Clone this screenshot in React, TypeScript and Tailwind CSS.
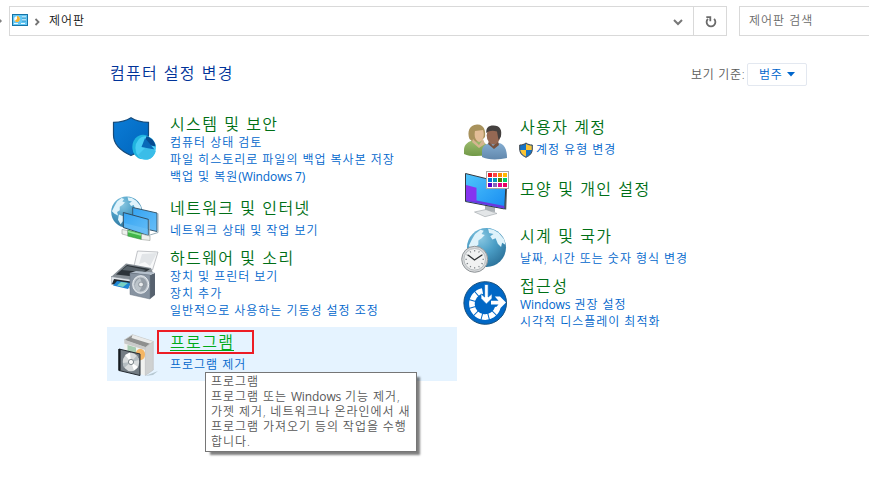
import React from "react";
import clsx from "clsx";

interface Category {
  title: string;
  links: React.ReactNode[];
  icon: React.ReactNode;
  row: string;
  iconPad: string;
  textPad: string;
  linkGap?: string;
  active?: boolean;
  shield?: boolean;
}

const Latin = ({ children }: { children: React.ReactNode }) => (
  <span className="font-normal tracking-[-0.1px]">{children}</span>
);

const Svg = ({ children }: { children: React.ReactNode }) => (
  <svg width="48" height="50" viewBox="0 0 48 50" className="block shrink-0">
    {children}
  </svg>
);

const Continents = () => (
  <g fill="#dff3fb">
    <path d="M-14-7L-11-12L-6-16L-3-15L-5-12L-2-11L-5-8L-8-6L-8-2L-11 0L-10 4L-14 2L-17-1Z" />
    <path d="M1-17L6-16L11-13L16-7L17-2L14-4L13 0L10-3L8-8L5-7L3-10L6-12L2-13Z" />
    <path d="M-9 3L-4 5L-3 9L-7 14L-10 9Z" />
  </g>
);

const SecurityIcon = () => (
  <Svg>
    <defs>
      <linearGradient id="shield" x1="0" y1="0" x2="1" y2="1">
        <stop stopColor="#0b7cd6" />
        <stop offset="1" stopColor="#0065bc" />
      </linearGradient>
    </defs>
    <path d="M20 2.8C15 6 9 7.3 2.5 7.3V20C2.5 29 10 36 20 40.5C31 36 37.5 29 37.5 20V7.3C31 7.3 25 6 20 2.8Z" fill="url(#shield)" stroke="#164a79" strokeWidth="1.2" />
    <ellipse cx="32" cy="32" rx="10.7" ry="12.2" fill="#20b4df" />
    <ellipse cx="34.7" cy="33" rx="10.3" ry="11.8" fill="#48cdf4" />
    <path d="M35 32L44.7 36C43.5 40.5 41 43.5 37 44.5C33 45 29 43 27 40Z" fill="#3abde8" />
    <path d="M33 29L35.5 21.2C40.5 22.5 44 26 44.6 31.5Z" fill="#064b91" />
    <path d="M30.5 32L34 23L43.5 34.5Z" fill="#0969b8" />
  </Svg>
);

const NetworkIcon = () => (
  <Svg>
    <defs>
      <radialGradient id="globe" cx="0.35" cy="0.25" r="0.8">
        <stop stopColor="#8ac8e2" />
        <stop offset="0.5" stopColor="#4b9ec6" />
        <stop offset="1" stopColor="#2d739b" />
      </radialGradient>
      <linearGradient id="screen" x1="0" y1="0" x2="1" y2="1">
        <stop stopColor="#34a4f2" />
        <stop offset="1" stopColor="#66bdf7" />
      </linearGradient>
    </defs>
    <circle cx="15.7" cy="17" r="15.5" fill="url(#globe)" />
    <g transform="translate(15.7 17) scale(.87)"><Continents /></g>
    <path d="M21.7 12.5L46 18V36.5L21.7 31Z" fill="url(#screen)" stroke="#385a70" />
    <path d="M47 18.5V37.5L39 40" fill="none" stroke="#98adb8" />
    <path d="M12.3 17.5L37.3 24.3V40.5L12.3 32.5Z" fill="url(#screen)" stroke="#304e63" />
    <path d="M13 28L37 34V40L13 32Z" fill="#78c6f8" opacity=".4" />
    <path d="M38.3 25V41" stroke="#98adb8" />
    <path d="M16.5 35L30.5 38.5V44.5L16.5 41Z" fill="#42b54a" stroke="#278634" strokeWidth=".5" />
    <path d="M17 36.5L30 39.8" stroke="#92e598" strokeWidth="1.8" />
    <path d="M11 34.5L16.5 35.5V40.5L11 39ZM30.5 39L39 41V45.5L30.5 44.5Z" fill="#eef0ed" stroke="#999e99" strokeWidth=".6" />
  </Svg>
);

const HardwareIcon = () => (
  <Svg>
    <path d="M26.5 1L47 2L41.5 20L23 16Z" fill="#f7f8f9" stroke="#a7abb0" strokeWidth=".7" />
    <path d="M31 4L46 3L39 16L34 12L28 14Z" fill="#e2e5e8" />
    <path d="M0 27L15 13.5L24 15L40 18L42 23L24 32Z" fill="#858d94" />
    <path d="M5 24.5L16 15L39 19L27 27Z" fill="#2c3339" />
    <path d="M11 20L16 16L35 20L31 22Z" fill="#59636b" />
    <path d="M0 26.5L24 30V39L0 34Z" fill="#e3e7ec" stroke="#858e96" strokeWidth=".7" />
    <path d="M3 29L20 31.5L17 36L1 34Z" fill="#20282e" />
    <path d="M6 31L20 33L17 39L2 35.5Z" fill="#1f85d3" />
    <path d="M10 32L17 33L12 37L6 35.5Z" fill="#77d1c3" />
    <path d="M39 25L44 23V45L39 49Z" fill="#56616e" />
    <path d="M19 23L25 21L44 22.5L39 25Z" fill="#b4bfcb" />
    <path d="M19 23L39 25V49L19 44.5Z" fill="#8793a1" stroke="#687482" strokeWidth=".5" />
    <ellipse cx="29.7" cy="34.5" rx="8" ry="8.8" fill="#c4cbd2" stroke="#ecf0f3" />
    <ellipse cx="29.7" cy="34.5" rx="6.3" ry="7" fill="#969fa8" />
    <path d="M29 28L32 35L28 42C23 39 22 32 29 28" fill="#bcc4ca" />
    <circle cx="30" cy="34.5" r="2.4" fill="#e8ebed" stroke="#68717a" strokeWidth=".6" />
  </Svg>
);

const ProgramsIcon = () => (
  <Svg>
    <path d="M34 45L47 40L42 44Z" fill="#b7c8d2" />
    <path d="M13.3 9L21.5 3.7L42.3 10.5L34.3 16.5Z" fill="#8e8f8e" stroke="#c8c9c7" strokeWidth=".8" />
    <path d="M21.5 3.7L42.3 10.5L40 13L20.5 7Z" fill="#e9eae9" />
    <path d="M13.3 10L34.3 16.5V44.5L13.3 39Z" fill="#f1f2f0" />
    <path d="M16.5 14L25 16.5V24L16.5 21.5Z" fill="#a6ccb0" />
    <ellipse cx="29.3" cy="23.5" rx="4.8" ry="5.8" fill="#f5b663" />
    <path d="M34.3 16.5L42.3 10.5V39L34.3 44.5Z" fill="#cfd1d1" stroke="#b5b7b7" strokeWidth=".5" />
    <path d="M13.3 9L34.3 16V19L13.3 12.5Z" fill="#c9cac9" />
    <path d="M8 18L29 23V44.5L8 39.5Z" fill="#737c83" stroke="#242a30" />
    <path d="M8.5 18V39.5" stroke="#171c21" strokeWidth="2.2" />
    <ellipse cx="20" cy="31" rx="8.2" ry="9.3" fill="#d7dbdc" />
    <path d="M20 31L14 24L19 21.5ZM20 31L27 36L23 39.5Z" fill="#ffffff" />
    <path d="M20 31L13 37L11.8 32ZM20 31L26 24.5L28 29Z" fill="#b4bdc1" />
    <circle cx="20" cy="31" r="2.6" fill="#f9fafa" stroke="#7c868a" />
  </Svg>
);

const UsersIcon = () => (
  <Svg>
    <defs>
      <linearGradient id="green" x1="0" y1="0" x2="0" y2="1"><stop stopColor="#9fbd70" /><stop offset="1" stopColor="#719947" /></linearGradient>
      <linearGradient id="blue" x1="0" y1="0" x2="0" y2="1"><stop stopColor="#83acd0" /><stop offset="1" stopColor="#6288ad" /></linearGradient>
    </defs>
    <path d="M3 36V32C3 26 8 23 13 22H20L26 27V37.5C18 38 9 39 3 36Z" fill="url(#green)" />
    <path d="M8.5 21C6 14 8 7 16 6.5C23 6 25 13 24 19L20 23L12 24Z" fill="#a8925c" />
    <path d="M14 13L22 12C24 17 22 23 18 24C14 22 13 18 14 13Z" fill="#e2bd97" />
    <path d="M12 21L18 27L22 21L24 26L18 30L11 24Z" fill="#d4b58f" />
    <path d="M21 39V33C21 28 25 25.5 30 25H38C43 26 46 31 46 40C38 42 26 42 21 39Z" fill="url(#blue)" />
    <path d="M28 23L32 28L37 23L38 27L33 31L27 26Z" fill="#77523f" />
    <ellipse cx="32.5" cy="17.5" rx="6.8" ry="9" fill="#946853" />
    <path d="M25.3 15C25 10 27 7.5 32.5 7.5C39 7.5 41.5 12 39.8 19L37.5 22L36 13.5C32 12 28 12.5 25.3 15Z" fill="#45413f" />
  </Svg>
);

const swatches = [
  "#e81123", "#ff4343", "#ff8c00", "#ffb900",
  "#0078d7", "#0099bc", "#498205", "#00cc6a",
  "#5500cc", "#8764b8", "#e3008c", "#ea005e",
];

const AppearanceIcon = () => (
  <Svg>
    <defs><linearGradient id="display" x1="0" y1="0" x2="1" y2="1"><stop stopColor="#50c5fc" /><stop offset="1" stopColor="#168bf1" /></linearGradient></defs>
    <path d="M24 36L34 38V43L24 42Z" fill="#a9b0b5" />
    <path d="M13.5 43L25 40.5L36 44.5L24 47.7Z" fill="#e3e6e8" stroke="#9ca3a7" strokeWidth=".6" />
    <path d="M4.5 4.5L45 14.5L43.7 40L4.5 32.5Z" fill="url(#display)" stroke="#333940" />
    <path d="M5 30L15.5 31.5L43.3 37V39.5L5 32Z" fill="#6a38df" />
    <path d="M5 16L15.5 18.7V32.5L5 31Z" fill="#8634ef" />
    <path d="M45.4 17L44.7 40.5" fill="none" stroke="#252b31" />
    <rect x="25.5" y="2.5" width="22" height="17" fill="#ffffff" stroke="#a7a7a7" />
    {swatches.map((c, i) => (
      <rect key={c} x={27 + (i % 4) * 5} y={4 + Math.floor(i / 4) * 5} width="4" height="4" fill={c} />
    ))}
  </Svg>
);

const ClockIcon = () => (
  <Svg>
    <circle cx="25.5" cy="22.5" r="19.5" fill="url(#globe)" />
    <g transform="translate(26 22) scale(1.08)"><Continents /></g>
    <circle cx="13.7" cy="34.3" r="13" fill="#d6d8da" stroke="#919699" />
    <circle cx="13.7" cy="34.3" r="10.8" fill="#f1f2f2" stroke="#b9bec0" />
    <g stroke="#777d82" strokeWidth="1">
      {[0, 30, 60, 90, 120, 150, 180, 210, 240, 270, 300, 330].map((a) => (
        <path key={a} d="M13.7 25V26.5" transform={`rotate(${a} 13.7 34.3)`} />
      ))}
    </g>
    <path d="M7 30L13.5 35L21 30" fill="none" stroke="#303436" strokeWidth="1.4" />
  </Svg>
);

const AccessIcon = () => (
  <Svg>
    <circle cx="24.2" cy="24" r="21.3" fill="#0067c5" stroke="#174f7d" />
    <path d="M21.5 12A13.2 13.2 0 1 0 36.8 28.5" fill="none" stroke="#ffffff" strokeWidth="5.6" />
    <g stroke="#0067c5" strokeWidth="1">
      {[135, 165, 195, 225, 255, 285, 320].map((a) => (
        <path key={a} d="M24.2 8V16" transform={`rotate(${a} 24.2 25)`} />
      ))}
    </g>
    <path d="M23.6 5.5H27.2V18L31 14.8V19.5L25.4 25L20 19.5V14.8L23.6 18Z" fill="#ffffff" stroke="#0067c5" strokeWidth=".7" />
    <path d="M30 21.8H37.5L33.8 17.5H39L45 23.5L39 29.5H33.8L37.5 25.5H30Z" fill="#ffffff" />
  </Svg>
);

const UacShield = () => (
  <svg width="14" height="16" viewBox="0 0 14 16" className="-ml-px mr-[3px] shrink-0">
    <path d="M7 1C5 2.5 3 3 .7 3V7C.7 11 3 13.5 7 15.3C11 13.5 13.3 11 13.3 7V3C11 3 9 2.5 7 1Z" fill="#1673c5" stroke="#42484d" />
    <path d="M7 2C9 3.3 11 3.6 12.7 3.7V8H7ZM1.3 8H7V14.5C3.5 13 1.6 10.5 1.3 8Z" fill="#fbc333" />
  </svg>
);

const leftItems: Category[] = [
  {
    title: "시스템 및 보안",
    links: ["컴퓨터 상태 검토", "파일 히스토리로 파일의 백업 복사본 저장", <>백업 및 복원<Latin>(Windows 7)</Latin></>],
    icon: <SecurityIcon />, row: "h-[84px]", iconPad: "pt-2", textPad: "pt-2", linkGap: "mt-px",
  },
  { title: "네트워크 및 인터넷", links: ["네트워크 상태 및 작업 보기"], icon: <NetworkIcon />, row: "h-[54px]", iconPad: "pt-1", textPad: "pt-2", linkGap: "mt-[5px]" },
  { title: "하드웨어 및 소리", links: ["장치 및 프린터 보기", "장치 추가", "일반적으로 사용하는 기동성 설정 조정"], icon: <HardwareIcon />, row: "h-[82px]", iconPad: "pt-[5px]", textPad: "pt-1", linkGap: "mt-px" },
  { title: "프로그램", links: ["프로그램 제거"], icon: <ProgramsIcon />, row: "h-[54px]", iconPad: "pt-1", textPad: "pt-1.5", linkGap: "mt-[5px]", active: true },
];

const rightItems: Category[] = [
  { title: "사용자 계정", links: ["계정 유형 변경"], icon: <UsersIcon />, row: "h-[58px]", iconPad: "pt-[11px]", textPad: "pt-[11px]", linkGap: "mt-[5px]", shield: true },
  { title: "모양 및 개인 설정", links: [], icon: <AppearanceIcon />, row: "h-[55px]", iconPad: "pt-1", textPad: "pt-[15px]" },
  { title: "시계 및 국가", links: ["날짜, 시간 또는 숫자 형식 변경"], icon: <ClockIcon />, row: "h-[55px]", iconPad: "pt-[5px]", textPad: "pt-[7px]", linkGap: "mt-[5px]" },
  { title: "접근성", links: [<><Latin>Windows</Latin> 권장 설정</>, "시각적 디스플레이 최적화"], icon: <AccessIcon />, row: "h-[56px]", iconPad: "pt-1", textPad: "pt-0.5", linkGap: "mt-px" },
];

const CategoryRow = ({ item }: { item: Category }) => (
  <div className={clsx("flex pl-1", item.row, item.active && "bg-[#e5f3ff]")}>
    <div className={clsx("w-[59px] shrink-0", item.iconPad)}>{item.icon}</div>
    <div className={item.textPad}>
      <div className={clsx("relative w-fit text-base leading-[18px] tracking-[1.35px] [word-spacing:0.5px]", item.active ? "text-[#00aa18]" : "text-[#006f16]")}>
        {item.title}
        {item.active && (
          <>
            <span className="absolute left-0 top-[17px] h-px w-16 bg-[#00aa18]" />
            <span className="absolute -left-[13px] -top-[3px] h-6 w-[97px] border-2 border-[#ed1c24]" />
          </>
        )}
      </div>
      <div className={item.linkGap}>
        {item.links.map((link, i) => (
          <div key={i} className="flex h-[17px] items-center text-xs leading-[17px] text-[#0066cc] [word-spacing:-0.1px]">
            {item.shield && <UacShield />}
            <span>{link}</span>
          </div>
        ))}
      </div>
    </div>
  </div>
);

const AddressBar = () => (
  <div className="flex h-9 pt-1.5 text-xs">
    <svg width="9" height="30" viewBox="0 0 9 30" className="shrink-0">
      <path d="M-2 12L1 15L-2 18" fill="none" stroke="#808080" strokeWidth="1.5" />
    </svg>
    <div className="flex h-[30px] w-[718px] shrink-0 border border-[#d9d9d9]">
      <div className="flex flex-1 items-center pl-0.5">
        <svg width="16" height="12" viewBox="0 0 16 12" className="mb-0.5">
          <rect x=".5" y=".5" width="15" height="11" fill="#63c7f4" stroke="#1673a6" />
          <circle cx="5" cy="5" r="2.8" fill="#f8fbff" />
          <path d="M5 5V2A3 3 0 1 1 2.7 7Z" fill="#f6b331" />
          <path d="M10 3H14M10 6H14" stroke="#fff" />
          <path d="M10 4H14M10 7H14" stroke="#197eb4" strokeWidth=".7" />
          <path d="M2 9.5H6M9 9.5H13" stroke="#e9faff" />
        </svg>
        <svg width="8" height="10" viewBox="0 0 8 10" className="ml-[6px] mt-0.5">
          <path d="M1.5 2L4.5 5L1.5 8" fill="none" stroke="#747474" strokeWidth="1.8" />
        </svg>
        <span className="ml-[7px] text-[#111111]">제어판</span>
        <svg width="12" height="10" viewBox="0 0 12 10" className="ml-auto mr-[9px] mt-0.5">
          <path d="M2 3L6 7L10 3" fill="none" stroke="#777777" strokeWidth="2" />
        </svg>
      </div>
      <div className="flex w-[33px] items-center justify-center border-l border-[#d9d9d9]">
        <svg width="14" height="14" viewBox="0 0 14 14" className="ml-0.5 mt-0.5">
          <path d="M3.9 3.8A4.4 4.4 0 1 0 10.1 3.8M2.3 2.2H6.3V6.2" fill="none" stroke="#6b6b6b" strokeWidth="1.8" />
        </svg>
      </div>
    </div>
    <div className="ml-3 h-[30px] flex-1 border border-r-0 border-[#d9d9d9] pl-[9px] leading-7 text-[#6a6a6a]">제어판 검색</div>
  </div>
);

export default function App() {
  return (
    <main className="relative h-[496px] w-[869px] overflow-hidden whitespace-nowrap bg-white font-['Open_Sans','Noto_Sans_CJK_KR',sans-serif] font-[350] tracking-[1px]">
      <AddressBar />
      <header className="flex h-[71px] items-start pl-[110px] pt-[27px]">
        <h1 className="w-[581px] text-base font-[350] leading-5 tracking-[1.28px] text-[#003399] [word-spacing:0.4px]">컴퓨터 설정 변경</h1>
        <span className="w-14 text-xs leading-[23px] tracking-[0.7px] text-[#5a5a5a]">보기 기준:</span>
        <button className="flex h-[23px] w-[60px] items-center rounded-xs border border-[#e3e8f0] pl-[11px] text-xs tracking-[0.7px] text-[#0066cc]">
          범주
          <svg width="8" height="5" viewBox="0 0 8 5" className="ml-[5px]"><path d="M0 0H8L4 4.5Z" fill="#0066cc" /></svg>
        </button>
      </header>
      <section className="flex pl-[107px]">
        <div className="w-[350px]">
          {leftItems.map((item) => <CategoryRow key={item.title} item={item} />)}
        </div>
        <div>
          {rightItems.map((item) => <CategoryRow key={item.title} item={item} />)}
        </div>
      </section>
      <div role="tooltip" className="absolute left-[205px] top-[372px] h-20 w-[212px] border border-[#767676] bg-white pl-[5px] pt-px text-xs leading-[15px] text-[#575757] [word-spacing:-0.3px] shadow-[4px_4px_2px_-1px_rgba(0,0,0,0.5)]">
        <div>프로그램</div>
        <div>프로그램 또는 <Latin>Windows</Latin> 기능 제거,</div>
        <div>가젯 제거, 네트워크나 온라인에서 새</div>
        <div>프로그램 가져오기 등의 작업을 수행</div>
        <div>합니다.</div>
      </div>
    </main>
  );
}
